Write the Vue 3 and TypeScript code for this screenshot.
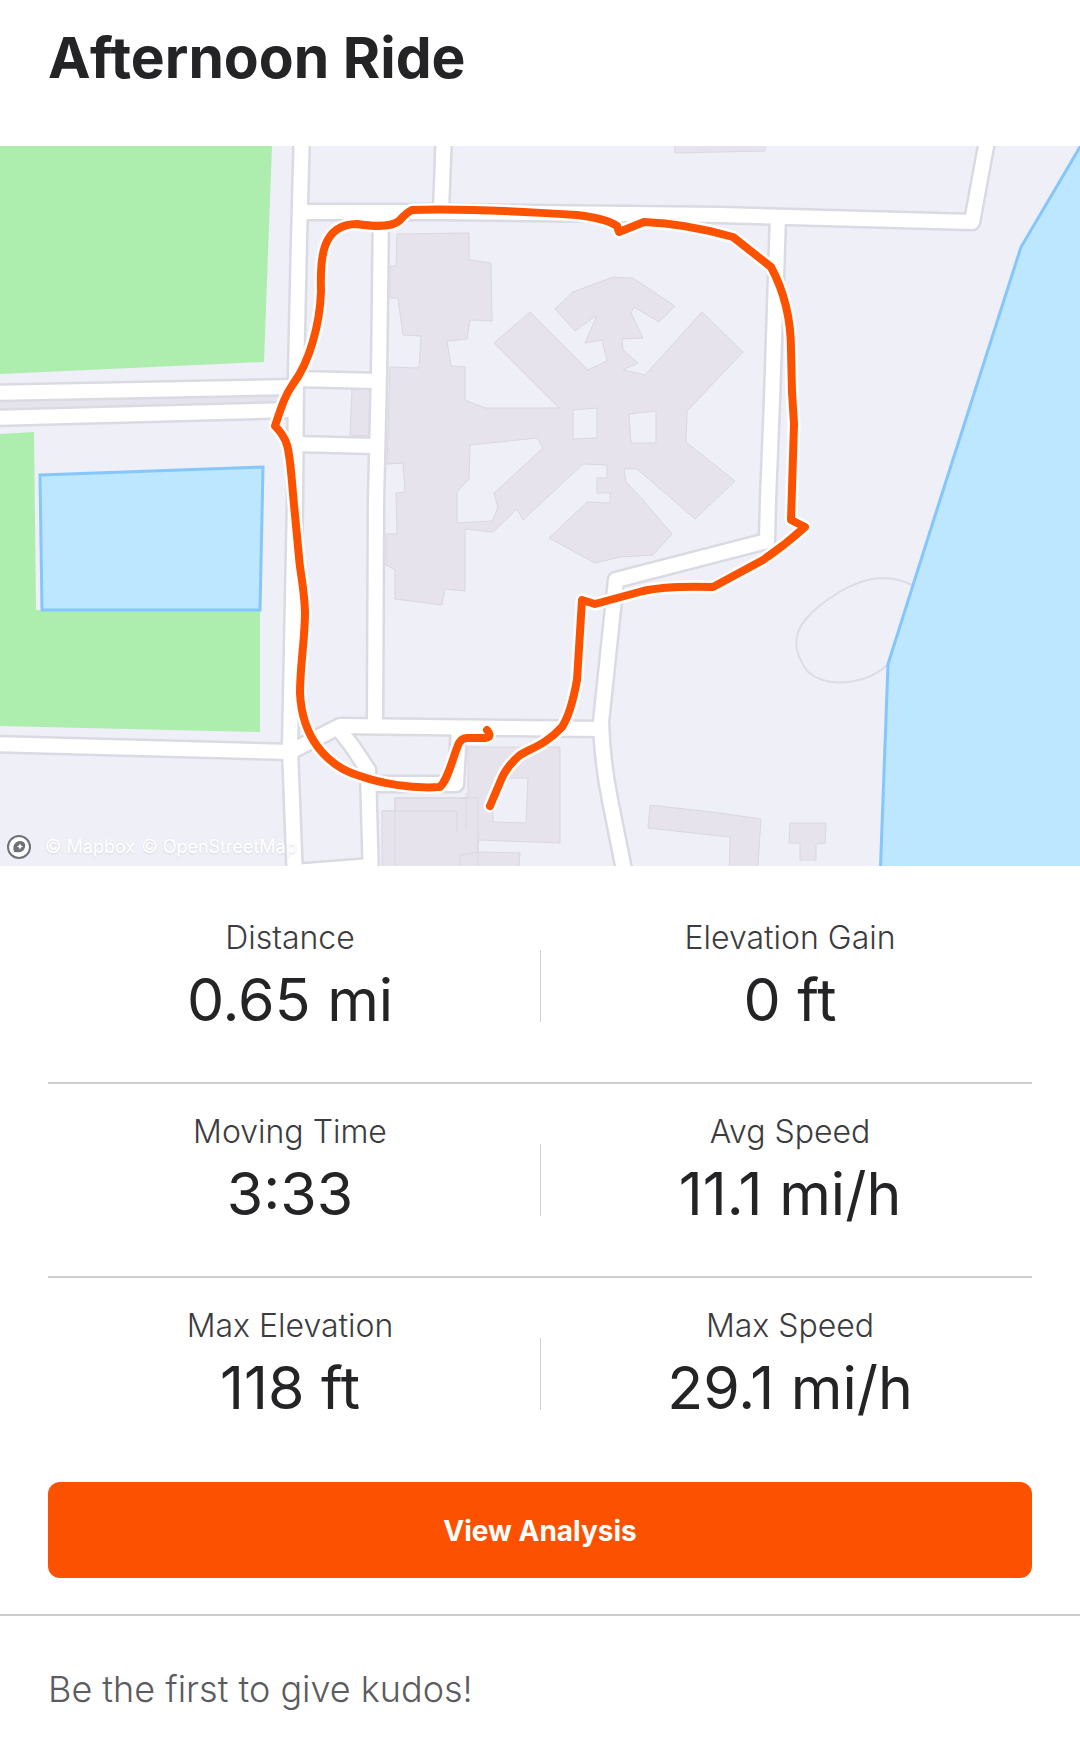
<script setup lang="ts">
interface Stat {
  label: string
  value: string
}

const title = 'Afternoon Ride'

const rows: Stat[][] = [
  [
    { label: 'Distance', value: '0.65 mi' },
    { label: 'Elevation Gain', value: '0 ft' },
  ],
  [
    { label: 'Moving Time', value: '3:33' },
    { label: 'Avg Speed', value: '11.1 mi/h' },
  ],
  [
    { label: 'Max Elevation', value: '118 ft' },
    { label: 'Max Speed', value: '29.1 mi/h' },
  ],
]

const roads: string[] = [
  'M302 130L299 240L296 375L295 500L290 748L295 880',
  'M302 212L441 212L720 215L972 222L989 130',
  'M444 130L441 212',
  'M381 212L379 375L376 500L375 726',
  'M-10 393L292 387',
  'M296 379L379 381',
  'M-10 418L292 410',
  'M294 444L376 446',
  'M-10 744L290 752L340 726L602 729',
  'M338 728L352 746L368 770L371 880',
  'M295 872L371 866',
  'M368 784L456 784L459 728',
  'M778 216L772 400L768 500L767 541L616 580L601 722Q602 760 610 800L626 880',
]

const buildings: string[] = [
  'M397 234L469 233V260L491 263L492 321L470 320L467 339L447 341L451 366L465 367V400L485 408H559L494 343L530 312L588 370L607 361L602 340L585 343L597 315L575 331L555 309L573 292L613 277L633 278L675 306L659 322L634 307L631 313L643 338L622 339L623 350L638 363L623 370L645 375L702 312L743 352L687 411L686 442L735 481L695 519L637 469H624L626 482L643 500L672 534L653 555L620 557L595 563L549 538L587 502L610 503V493H597V478H607V465L583 464L523 520L517 509L493 532L465 529V591L445 589L442 605L395 599V570L386 565V534H397L396 493L405 492L403 463L387 464L390 367L419 368L421 336L403 335L398 298H390V266H396ZM573 410L597 408V438L573 439ZM629 414L656 411V443H631ZM470 445L537 438L543 448L494 493L498 508L492 521L457 523V492L469 479Z',
  'M468 747H560V843L478 840V880H382V811H395V798H468ZM503 778H528L526 823L493 822V810Z',
  'M460 880V855L480 852L520 853L518 880Z',
  'M650 805L720 813L761 819L757 880H729L730 837L720 836L648 828Z',
  'M790 823H826L825 843L816 844V860H800V843H789Z',
  'M675 140H765V151L675 153Z',
  'M352 389H371V436L350 435Z',
]

const route =
  'M487 730Q493 737 485 738L467 738Q462 738 459 743C453 756 449 778 440 787C410 789 380 783 360 776C326 766 302 737 300 693C300 665 305 640 305 612C304 585 300 573 299 557L293 494C291 470 290 455 287 445Q284 435 275 426C281 408 285 395 293 384C309 363 320 325 321 291C320 260 321 224 357 224C377 227 391 227 399 221Q407 212 412 210C460 208 530 212 577 215Q608 219 617 226L619 232L644 222C674 223 705 229 733 237L771 267C785 293 791 322 791 350L792 392L794 424L791 520L805 527Q785 545 763 560L713 587C680 586 661 587 643 591L595 604L582 600L577 680Q571 713 562 727C546 744 534 747 520 755Q506 767 501 780L490 806'
</script>

<template>
  <main class="activity">
    <header class="heading">
      <h1>{{ title }}</h1>
    </header>

    <section class="map" aria-label="Route map">
      <svg class="canvas" viewBox="0 146 1080 720" aria-hidden="true">
        <rect x="0" y="146" width="1080" height="720" fill="#efeff8" />
        <g fill="#adedad">
          <path d="M0 146H272L264 362L0 374Z" />
          <path d="M0 434L34 432L36 610H260V732L0 726Z" />
        </g>
        <path d="M0 400L280 394V403L0 412Z" fill="#e5e4ec" />
        <g class="building">
          <path v-for="(d, i) in buildings" :key="i" :d="d" />
        </g>
        <g fill="none" stroke="#d8d7e1">
          <path d="M395 798H478V866M395 798V866M382 811H457V832M466 793V830" />
        </g>
        <path
          d="M912 585Q898 578 882 578C850 579 817 606 806 619C791 636 795 655 808 672C828 689 867 684 887 665"
          fill="none"
          stroke="#dedce2"
          stroke-width="2"
        />
        <g class="casing">
          <path v-for="(d, i) in roads" :key="i" :d="d" />
        </g>
        <g class="road">
          <path v-for="(d, i) in roads" :key="i" :d="d" />
        </g>
        <g fill="#bde6ff" stroke="#85c6fc" stroke-width="3">
          <path d="M40 475L263 467L260 610H42Z" />
          <path d="M1090 130L1021 247L940 500L888 664L880 880H1100Z" />
        </g>
        <path class="halo" :d="route" />
        <path class="route" :d="route" />
      </svg>

      <div class="attribution">
        <svg class="mark" viewBox="0 0 24 24" aria-hidden="true">
          <circle cx="12" cy="12" r="11" fill="#fff" stroke="#6f7177" stroke-width="2" />
          <path d="M7 17C5 11 8 6 13 6C17 6 19 9 18 12C17 17 12 18 7 17Z" fill="#6f7177" />
          <path d="M13 8.5L14 10.5L16 11.5L14 12.5L13 14.5L12 12.5L10 11.5L12 10.5Z" fill="#fff" />
        </svg>
        <a href="#mapbox">© Mapbox</a>
        <a href="#osm">© OpenStreetMap</a>
      </div>
    </section>

    <section class="stats" aria-label="Ride statistics">
      <div v-for="(row, r) in rows" :key="r" class="row">
        <dl v-for="stat in row" :key="stat.label" class="stat">
          <dt>{{ stat.label }}</dt>
          <dd>{{ stat.value }}</dd>
        </dl>
      </div>
    </section>

    <div class="action">
      <button type="button">View Analysis</button>
    </div>

    <footer class="kudos">Be the first to give kudos!</footer>
  </main>
</template>

<style>
body {
  margin: 0;
  background: #fff;
}
</style>

<style scoped>
.activity {
  font-family: Inter, 'Liberation Sans', sans-serif;
  color: #242426;
  background: #fff;
}

.heading {
  padding: 22px 48px 52px;
}

h1 {
  margin: 0;
  font-size: 57px;
  line-height: 72px;
  font-weight: 700;
}

.map {
  position: relative;
  overflow: hidden;
}

.canvas {
  display: block;
  width: 100%;
}

.building {
  fill: #e6e3ec;
  fill-rule: evenodd;
  stroke: #d9d7df;
  stroke-width: 1;
}

.casing,
.road {
  fill: none;
  stroke-linejoin: round;
}

.casing {
  stroke: #dadae3;
  stroke-width: 19;
}

.road {
  stroke: #fff;
  stroke-width: 14;
}

.halo,
.route {
  fill: none;
  stroke-linecap: round;
  stroke-linejoin: round;
}

.halo {
  stroke: #fff;
  stroke-width: 13;
}

.route {
  stroke: #fc5200;
  stroke-width: 8;
}

.attribution {
  position: absolute;
  left: 7px;
  bottom: 7px;
  display: flex;
  align-items: center;
  gap: 6px;
  font-size: 18px;
  line-height: 24px;
}

.attribution a {
  color: #fff;
  text-decoration: none;
  text-shadow: 0 1px 2px #d8d8e0;
}

.mark {
  width: 24px;
  height: 24px;
  margin-right: 8px;
}

.stats {
  padding: 24px 48px 0;
}

.row {
  position: relative;
  display: grid;
  grid-template-columns: 1fr 1fr;
  column-gap: 16px;
  padding: 28px 0 48px;
  border-bottom: 2px solid #cfcfd1;
  text-align: center;
}

.row:last-child {
  border-bottom: 0;
}

.row::after {
  content: '';
  position: absolute;
  top: 60px;
  left: 50%;
  width: 1px;
  height: 72px;
  background: #d0d0d2;
}

.stat {
  margin: 0;
}

dt {
  font-size: 32px;
  line-height: 40px;
  font-weight: 300;
  color: #3c3c40;
}

dd {
  margin: 8px 0 0;
  font-size: 59px;
  line-height: 68px;
}

.action {
  padding: 12px 48px 36px;
  border-bottom: 2px solid #cccccf;
}

button {
  display: block;
  width: 100%;
  height: 96px;
  padding: 2px 0 0;
  border: 0;
  border-radius: 12px;
  background: #fc5200;
  color: #fff;
  font: inherit;
  font-size: 28px;
  font-weight: 700;
}

.kudos {
  padding: 49px 48px 51px;
  font-size: 36px;
  line-height: 48px;
  font-weight: 300;
  color: #5c5c60;
}
</style>
